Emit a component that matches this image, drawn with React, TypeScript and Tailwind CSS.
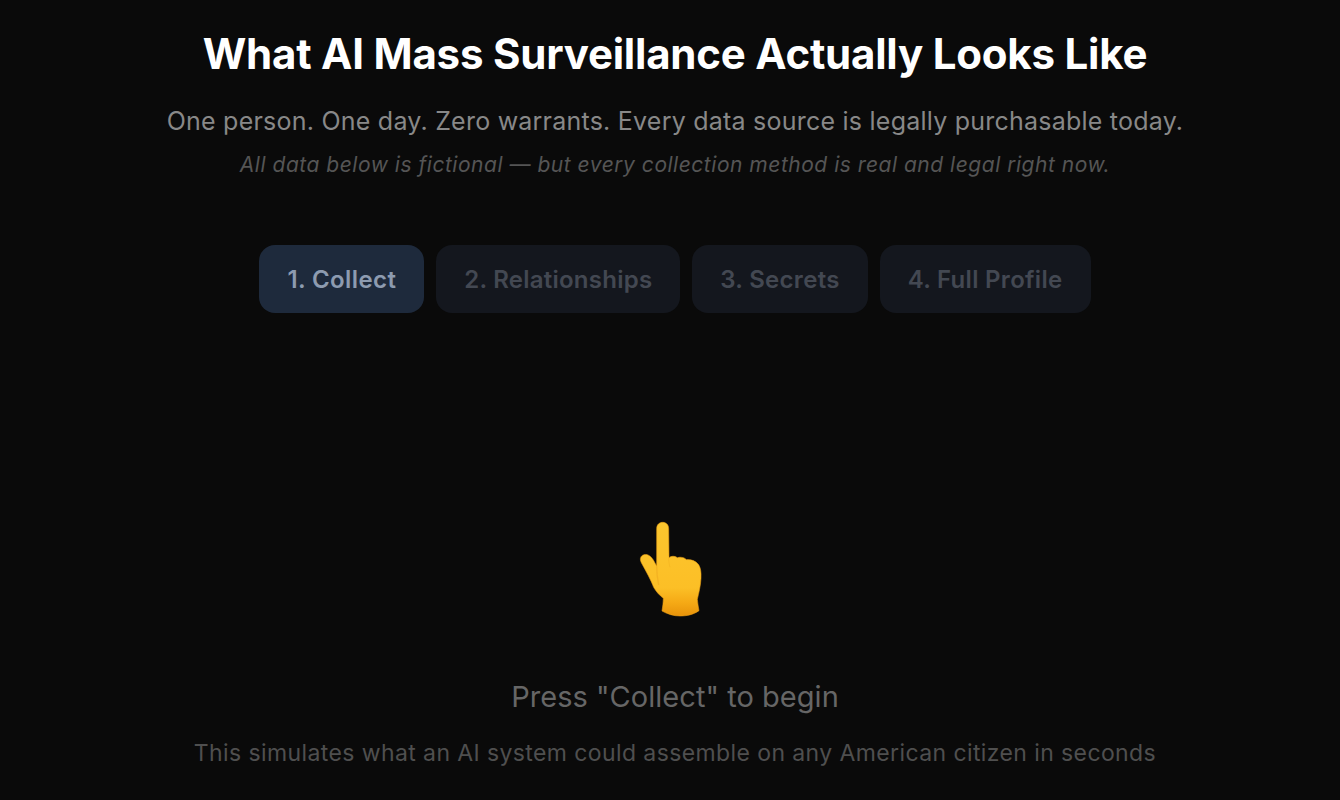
const steps = [
  { label: "1. Collect", cls: "bg-[#1e2a3c] tracking-[0.4px] text-[#8d9bb0]" },
  { label: "2. Relationships", cls: "bg-[#14171e] tracking-[0.24px] text-[#434852]" },
  { label: "3. Secrets", cls: "bg-[#14171e] tracking-[0.3px] text-[#434852]" },
  { label: "4. Full Profile", cls: "bg-[#14171e] tracking-[0.3px] text-[#434852]" },
];

function PointingHand() {
  return (
    <svg width="100" height="120" viewBox="0 0 300 360" aria-label="pointing up" className="-ml-[10px]">
      <defs>
        <linearGradient id="skin" x1="0" y1="0" x2="0" y2="1">
          <stop offset="0" stopColor="#fcc62e" />
          <stop offset="0.7" stopColor="#fcbf26" />
          <stop offset="0.86" stopColor="#f5a915" />
          <stop offset="1" stopColor="#e8930a" />
        </linearGradient>
      </defs>
      <path
        d="M110 56 C110 44 118 37 128 37 C138 37 146 44 146 56 L147 143 C155 137 165 138 172 143 C182 140 192 142 200 149 C212 148 226 152 235 163 C242 172 244 188 243 205 C242 228 236 250 232 268 C233 280 235 290 237 302 C220 314 200 318 180 318 C160 318 142 312 126 303 C128 290 130 278 130 265 C118 255 108 245 101 232 C94 212 78 184 64 158 C58 146 62 137 72 134 C84 131 94 140 100 150 L110 168 Z"
        fill="url(#skin)"
        stroke="#ec9f12"
        strokeWidth="3"
        strokeOpacity="0.55"
      />
      <path d="M146 143 C146 155 148 165 150 172" stroke="#e8a21c" strokeWidth="3" fill="none" opacity="0.3" />
      <path d="M110 168 C110 185 112 205 116 225" stroke="#e8a21c" strokeWidth="4" fill="none" opacity="0.45" />
    </svg>
  );
}

export default function App() {
  return (
    <div className="min-h-[800px] overflow-hidden bg-[#0a0a0a] pl-[10px] text-center font-['Inter',sans-serif]">
      <h1 className="pt-[28px] text-[42px] leading-[52px] font-bold tracking-[-0.22px] text-white">
        What AI Mass Surveillance Actually Looks Like
      </h1>
      <p className="mt-[25px] text-[25px] leading-[32px] tracking-[0.23px] text-[#888888]">
        One person. One day. Zero warrants. Every data source is legally purchasable today.
      </p>
      <p className="mt-[15px] text-[21px] leading-[26px] tracking-[0.52px] text-[#555555] italic">
        All data below is fictional — but every collection method is real and legal right now.
      </p>

      <div className="mt-[67px] flex justify-center gap-3">
        {steps.map((step) => (
          <button
            key={step.label}
            className={"h-[68px] rounded-2xl px-7 pt-[2px] text-[24px] font-semibold " + step.cls}
          >
            {step.label}
          </button>
        ))}
      </div>

      <div className="mt-[197px] flex justify-center">
        <PointingHand />
      </div>
      <p className="mt-[49px] text-[29px] leading-[36px] tracking-[0.04px] text-[#666666]">Press "Collect" to begin</p>
      <p className="mt-[24px] text-[23px] leading-[28px] tracking-[0.4px] text-[#4f4f4f]">
        This simulates what an AI system could assemble on any American citizen in seconds
      </p>
    </div>
  );
}
